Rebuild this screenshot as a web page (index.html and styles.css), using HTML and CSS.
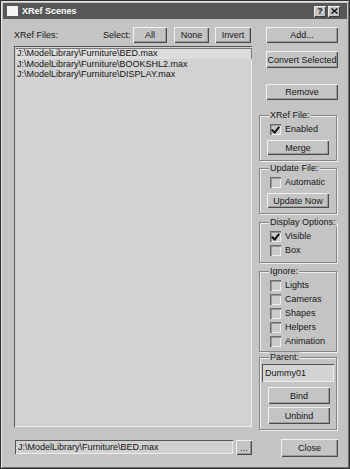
FILE: index.html
```html
<!DOCTYPE html>
<html lang="en">
<head>
    <meta charset="UTF-8">
    <title>XRef Scenes</title>
    <link rel="stylesheet" href="styles.css">
</head>
<body>

<div class="window">
    <div class="titlebar">
        <span class="app-icon"></span>
        <span class="title">XRef Scenes</span>
        <span class="title-btns">
            <span class="tbtn">?</span>
            <span class="tbtn">
                <svg width="7" height="6" viewBox="0 0 7 6"><path d="M0.5 0.5 L6.5 5.5 M6.5 0.5 L0.5 5.5" stroke="#111" stroke-width="1.4"/></svg>
            </span>
        </span>
    </div>

    <div class="content">
        <div class="left">
            <div class="files-head">
                <span class="files-lbl">XRef Files:</span>
                <span class="select-lbl">Select:</span>
                <button class="btn btn-all">All</button>
                <button class="btn btn-none">None</button>
                <button class="btn btn-invert">Invert</button>
            </div>
            <ul class="file-list">
                <li class="selected">J:\ModelLibrary\Furniture\BED.max</li>
                <li>J:\ModelLibrary\Furniture\BOOKSHL2.max</li>
                <li>J:\ModelLibrary\Furniture\DISPLAY.max</li>
            </ul>
            <div class="path-row">
                <div class="field path-field">J:\ModelLibrary\Furniture\BED.max</div>
                <button class="btn btn-dots">...</button>
            </div>
        </div>

        <div class="right">
            <button class="btn rbtn btn-add">Add...</button>
            <button class="btn rbtn btn-convert">Convert Selected</button>
            <button class="btn rbtn btn-remove">Remove</button>

            <fieldset class="group g-xref">
                <legend>XRef File:</legend>
                <label class="check"><span class="box checked"></span>Enabled</label>
                <button class="btn gbtn">Merge</button>
            </fieldset>

            <fieldset class="group g-update">
                <legend>Update File:</legend>
                <label class="check"><span class="box"></span>Automatic</label>
                <button class="btn gbtn">Update Now</button>
            </fieldset>

            <fieldset class="group g-display">
                <legend>Display Options:</legend>
                <label class="check"><span class="box checked"></span>Visible</label>
                <label class="check"><span class="box"></span>Box</label>
            </fieldset>

            <fieldset class="group g-ignore">
                <legend>Ignore:</legend>
                <label class="check"><span class="box"></span>Lights</label>
                <label class="check"><span class="box"></span>Cameras</label>
                <label class="check"><span class="box"></span>Shapes</label>
                <label class="check"><span class="box"></span>Helpers</label>
                <label class="check"><span class="box"></span>Animation</label>
            </fieldset>

            <fieldset class="group g-parent">
                <legend>Parent:</legend>
                <div class="field parent-field">Dummy01</div>
                <button class="btn gbtn btn-bind">Bind</button>
                <button class="btn gbtn btn-unbind">Unbind</button>
            </fieldset>

            <button class="btn btn-close">Close</button>
        </div>
    </div>
</div>

</body>
</html>
```

FILE: styles.css
```css
body {
    margin: 0;
    font-family: "Liberation Sans", Arial, sans-serif;
    font-size: 9px;
    color: #141414;
}
.window {
    width: 350px;
    height: 469px;
    box-sizing: border-box;
    border: 1px solid #2e2e2e;
    padding: 2px;
    background-color: #c4c4c4;
    box-shadow: inset 1px 1px 0 #e4e4e4, inset -1px -1px 0 #6e6e6e;
    overflow: hidden;
}
.titlebar {
    height: 16px;
    display: flex;
    align-items: center;
    padding: 0 7px 0 4px;
    background-color: #575757;
}
.app-icon {
    width: 11px;
    height: 10px;
    margin-right: 4px;
    background-color: #f4f4f4;
}
.title {
    color: #fff;
    font-weight: bold;
}
.title-btns {
    margin-left: auto;
    display: flex;
    gap: 2px;
}
.tbtn {
    width: 12px;
    height: 11px;
    display: flex;
    align-items: center;
    justify-content: center;
    background-color: #c4c4c4;
    font-weight: bold;
    font-size: 9px;
    color: #111;
    box-shadow: inset 1px 1px 0 #efefef, inset -1px -1px 0 #3c3c3c;
}

/* main area */
.content {
    display: flex;
    padding: 8px 6px 0 11px;
}
.left {
    width: 238px;
    display: flex;
    flex-direction: column;
}
.right {
    width: 82px;
    margin-left: 7px;
    display: flex;
    flex-direction: column;
}

.btn {
    padding: 0;
    border: none;
    font-family: inherit;
    font-size: 9px;
    color: #141414;
    background-color: #c4c4c4;
    white-space: nowrap;
    box-shadow: inset 1px 1px 0 #f0f0f0, inset -1px -1px 0 #4a4a4a, inset -2px -2px 0 #9c9c9c;
}

.files-head {
    height: 16px;
    display: flex;
    align-items: center;
}
.files-lbl {
    width: 89px;
}
.select-lbl {
    width: 30px;
}
.btn-all {
    width: 34px;
    height: 16px;
}
.btn-none {
    width: 35px;
    height: 16px;
    margin-left: 7px;
}
.btn-invert {
    width: 36px;
    height: 16px;
    margin-left: 6px;
}

.file-list {
    list-style: none;
    margin: 3px 0 0;
    padding: 2px 0 0 2px;
    height: 381px;
    box-sizing: border-box;
    background-color: #d2d2d2;
    box-shadow: inset 1px 1px 0 #555, inset -1px -1px 0 #ececec;
}
.file-list li {
    height: 10.5px;
    line-height: 10.5px;
    padding-left: 1px;
}
.file-list li.selected {
    background-color: #dcdcdc;
    box-shadow: inset 0 1px 0 #7a7a7a, inset -1px 0 0 #7a7a7a;
}

.field {
    box-sizing: border-box;
    background-color: #d0d0d0;
    box-shadow: inset 1px 1px 0 #555, inset -1px -1px 0 #ececec;
    padding-left: 3px;
    display: flex;
    align-items: center;
}
.path-row {
    display: flex;
    margin-top: 13px;
}
.path-field {
    width: 218px;
    height: 14px;
    margin-left: 1px;
}
.btn-dots {
    width: 16px;
    height: 15px;
    margin-left: 3px;
}

/* right column */
.rbtn {
    width: 72px;
    margin-left: 7px;
}
.btn-add {
    height: 16px;
}
.btn-convert {
    height: 17px;
    margin-top: 8px;
}
.btn-remove {
    height: 16px;
    margin-top: 16px;
}

.group {
    width: 78px;
    min-width: 0;
    box-sizing: border-box;
    margin: 0;
    padding: 2px 0 5px 7px;
    border: 1px solid #858585;
    box-shadow: inset 1px 1px 0 #eeeeee, 1px 1px 0 #eeeeee;
    display: flex;
    flex-direction: column;
    align-items: flex-start;
}
.group legend {
    padding: 0 1px;
    margin-left: 2px;
    line-height: 10px;
    white-space: nowrap;
    background-color: #c4c4c4;
}
.g-xref {
    margin-top: 10px;
}
.g-update {
    margin-top: 2px;
}
.g-display {
    margin-top: 3px;
}
.g-ignore {
    margin-top: 3px;
    padding-bottom: 3px;
}
.g-parent {
    margin-top: 0;
}

.check {
    height: 14px;
    display: flex;
    align-items: center;
    margin-left: 3px;
}
.box {
    width: 11px;
    height: 11px;
    box-sizing: border-box;
    margin-right: 4px;
    background-color: #cbcbcb;
    box-shadow: inset 1px 1px 0 #6a6a6a, inset 2px 2px 0 #9a9a9a, inset -1px -1px 0 #eeeeee;
    position: relative;
}
.box.checked::after {
    content: "";
    position: absolute;
    left: 3px;
    top: 1px;
    width: 3px;
    height: 6px;
    border: solid #111;
    border-width: 0 2px 2px 0;
    transform: rotate(40deg);
}
.gbtn {
    width: 62px;
    height: 15px;
}
.g-xref .gbtn,
.g-update .gbtn {
    margin-top: 4px;
}
.parent-field {
    width: 72px;
    height: 18px;
    margin-left: -5px;
    background-color: #d4d4d4;
}
.btn-bind {
    height: 17px;
    margin-top: 5px;
    margin-left: 1px;
}
.btn-unbind {
    height: 17px;
    margin-top: 3px;
    margin-left: 1px;
}
.btn-close {
    width: 57px;
    height: 18px;
    margin-top: 9px;
    margin-left: 22px;
}
```
